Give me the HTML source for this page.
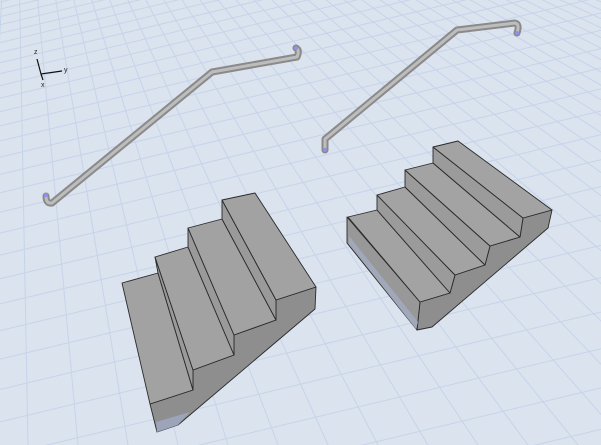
<!DOCTYPE html>
<html><head><meta charset="utf-8"><style>
html,body{margin:0;padding:0;width:601px;height:445px;overflow:hidden;background:#dbe3ee}
svg{display:block;overflow:hidden}
</style></head><body>
<svg id="s" width="601" height="445" viewBox="0 0 601 445" xmlns="http://www.w3.org/2000/svg">
<rect width="601" height="445" fill="#dbe3ee"/>
<g id="grid" stroke="#c6d3ea" stroke-width="1" fill="none"></g>
<g stroke="#111" stroke-width="1.2" fill="none">
<path d="M37,59 L41,74 L62,71 M41,74 L43,80"/>
</g>
<g font-family="Liberation Sans, sans-serif" font-size="7" fill="#222">
<text x="34" y="54">z</text><text x="64" y="72">y</text><text x="41" y="87">x</text>
</g>
<g fill="none" stroke-linecap="round" stroke-linejoin="round">
<path d="M46,196 Q46,204 52,203 L212,72 L297,57 Q300,50 296,48" stroke="#8a8a8a" stroke-width="7"/>
<path d="M46,196 Q46,204 52,203 L212,72 L297,57 Q300,50 296,48" stroke="#bdbdbd" stroke-width="3"/>
<path d="M325,150 L325,139 L330,135 L457,30 L515,23 Q520,24 517,33" stroke="#8a8a8a" stroke-width="7"/>
<path d="M325,150 L325,139 L330,135 L457,30 L515,23 Q520,24 517,33" stroke="#bdbdbd" stroke-width="3"/>
</g>
<g fill="#9090e8"><circle cx="46" cy="195" r="2"/><circle cx="296" cy="48" r="2"/><circle cx="325" cy="150" r="2"/><circle cx="517" cy="33" r="2"/></g>
<g stroke="#2a2a2a" stroke-width="0.9" stroke-linejoin="round">
<polygon points="150,404 193,390 193,370 234,355 234,335 276,320 276,300 316,287 315,309 178,425 157,432" fill="#8e8e8e"/>
<polygon points="157,432 178,425 190,412 156,422" fill="#9ba4b8" stroke="none"/>
<polygon points="122,283 158,273 193,390 150,404" fill="#a2a2a2"/>
<polygon points="155,257 158,273 193,390 193,370" fill="#9a9a9a"/>
<polygon points="155,257 188,247 234,355 193,370" fill="#a2a2a2"/>
<polygon points="188,228 188,247 234,355 234,335" fill="#9a9a9a"/>
<polygon points="188,228 222,219 276,320 234,335" fill="#a2a2a2"/>
<polygon points="222,200 222,219 276,320 276,300" fill="#9a9a9a"/>
<polygon points="222,200 255,193 316,287 276,300" fill="#a2a2a2"/>
</g>
<g stroke="#2a2a2a" stroke-width="0.9" stroke-linejoin="round">
<polygon points="420,302 450,293 455,275 485,265 490,246 520,237 523,218 552,210 548,228 432,327 417,330" fill="#8e8e8e"/>
<polygon points="347,217 420,302 417,330 347,243" fill="#989898"/>
<polygon points="349,244 416,329 418,322 349,236" fill="#a0a8ba" stroke="none"/>
<polygon points="348,217 377,210 450,293 420,302" fill="#a3a3a3"/>
<polygon points="377,195 377,210 450,293 455,275" fill="#9b9b9b"/>
<polygon points="377,195 405,187 485,265 455,275" fill="#a3a3a3"/>
<polygon points="405,170 405,187 485,265 490,246" fill="#9b9b9b"/>
<polygon points="405,170 433,163 520,237 490,246" fill="#a3a3a3"/>
<polygon points="433,147 433,163 520,237 523,218" fill="#9b9b9b"/>
<polygon points="433,147 458,141 552,210 523,218" fill="#a3a3a3"/>
</g>
</svg>
<script>
(function(){
var g=document.getElementById('grid'),h='';
var vx=15,vy=-251;
for(var k=-12;k<40;k++){
 var xb=28+50*k;
 h+='<line x1="'+vx+'" y1="'+vy+'" x2="'+xb+'" y2="445"/>';
}
var y=-40;
while(y<600){
 var s=7+0.065*Math.max(y,0);
 h+='<line x1="0" y1="'+y.toFixed(1)+'" x2="601" y2="'+(y-0.24*601).toFixed(1)+'"/>';
 y+=s;
}
g.innerHTML=h;
})();
</script>
</body></html>
